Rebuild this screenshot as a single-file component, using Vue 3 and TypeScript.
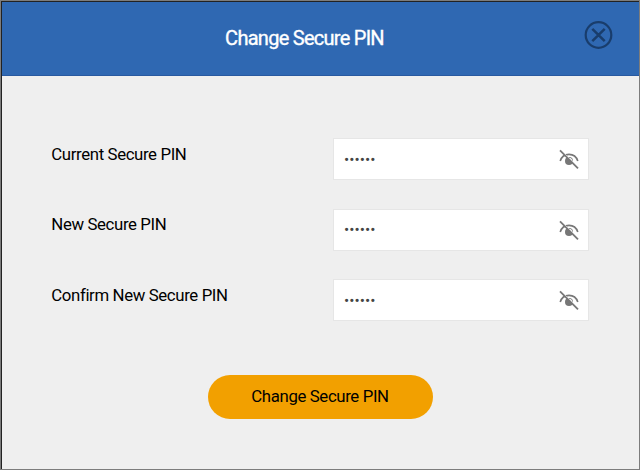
<script setup lang="ts">
import { reactive } from 'vue'

interface PinField {
  id: string
  label: string
  value: string
  visible: boolean
}

const fields = reactive<PinField[]>([
  { id: 'current-pin', label: 'Current Secure PIN', value: '000000', visible: false },
  { id: 'new-pin', label: 'New Secure PIN', value: '000000', visible: false },
  { id: 'confirm-pin', label: 'Confirm New Secure PIN', value: '000000', visible: false },
])
</script>

<template>
  <section class="dialog">
    <header class="header">
      <h1 class="title">Change Secure PIN</h1>
      <button class="close" type="button">
        <svg width="30" height="30" viewBox="0 0 30 30" fill="none" stroke="#193d6c" stroke-width="2.2">
          <circle cx="15.500" cy="15" r="12.8" />
          <path d="M9.300 8.800 21.700 21.200M21.700 8.800 9.300 21.200" stroke-width="2.5" />
        </svg>
      </button>
    </header>
    <form class="form" @submit.prevent>
      <div v-for="field in fields" :key="field.id" class="row">
        <label class="label" :for="field.id">{{ field.label }}</label>
        <div class="control">
          <input :id="field.id" v-model="field.value" class="pin" :type="field.visible ? 'text' : 'password'" maxlength="6" />
          <button class="toggle" type="button" @click="field.visible = !field.visible">
            <svg width="22" height="22" viewBox="0 0 22 22" fill="none" stroke="#777" stroke-width="1.6">
              <path d="M2.2 13C3.600 8.600 7 6.400 11 6.400s7.400 2.200 8.800 6.600" />
              <circle cx="11" cy="13" r="4" fill="#777" stroke="none" />
              <path d="M11.200 10.200a3 3 0 0 1 3 3" stroke="#fff" stroke-width="1" />
              <path d="M3.500 2.500 21 20" stroke="#fff" stroke-width="0.900" />
              <path d="M2 2.300 20 20.300" stroke-width="1.700" />
            </svg>
          </button>
        </div>
      </div>
      <button class="submit" type="submit">Change Secure PIN</button>
    </form>
  </section>
</template>

<style>
body {
  margin: 0;
  background: #efefef;
}
</style>

<style scoped>
.dialog {
  box-sizing: border-box;
  width: 640px;
  height: 470px;
  border: 1px solid #7c7c7c;
  background: #efefef;
  box-shadow: inset 1px 1px 0 #222;
  padding: 1px 0 0 1px;
  font-family: Roboto, sans-serif;
  color: #000;
}

.header {
  box-sizing: border-box;
  height: 74px;
  display: grid;
  grid-template-columns: 56px 1fr 56px;
  align-items: center;
  background: #2f68b2;
  border-bottom: 1px solid #2859a0;
}

.title {
  grid-column: 2;
  margin: 0;
  padding: 0 32px 2px 0;
  text-align: center;
  font-size: 20px;
  line-height: 24px;
  font-weight: 400;
  letter-spacing: -0.73px;
  -webkit-text-stroke: 0.35px #fff;
  color: #fff;
}

.close,
.toggle {
  display: flex;
  padding: 0;
  border: 0;
  background: none;
  cursor: pointer;
}

.close {
  margin-bottom: 8px;
}

.form {
  display: flex;
  flex-direction: column;
  padding: 62px 50px 0 49px;
}

.row {
  display: flex;
  justify-content: space-between;
  height: 42px;
  margin-bottom: 28.5px;
}

.label {
  padding: 6.8px 0 0 0.3px;
  font-size: 16.8px;
  line-height: 19px;
  letter-spacing: -0.37px;
}

.control {
  box-sizing: border-box;
  display: flex;
  align-items: center;
  width: 256px;
  height: 42px;
  padding: 0 8px 0 10px;
  border: 1px solid #e6e6e6;
  background: #fff;
}

.pin {
  flex: 1;
  min-width: 0;
  padding: 1.5px 0 0;
  border: 0;
  outline: 0;
  background: none;
  font: 15.5px Roboto, sans-serif;
  color: #444;
}

.submit {
  align-self: center;
  width: 225px;
  height: 44px;
  margin-top: 25px;
  padding: 0 0 2px;
  border: 0;
  border-radius: 22px;
  background: #f2a000;
  font: 16.8px Roboto, sans-serif;
  letter-spacing: -0.37px;
  color: #000;
  cursor: pointer;
}
</style>
